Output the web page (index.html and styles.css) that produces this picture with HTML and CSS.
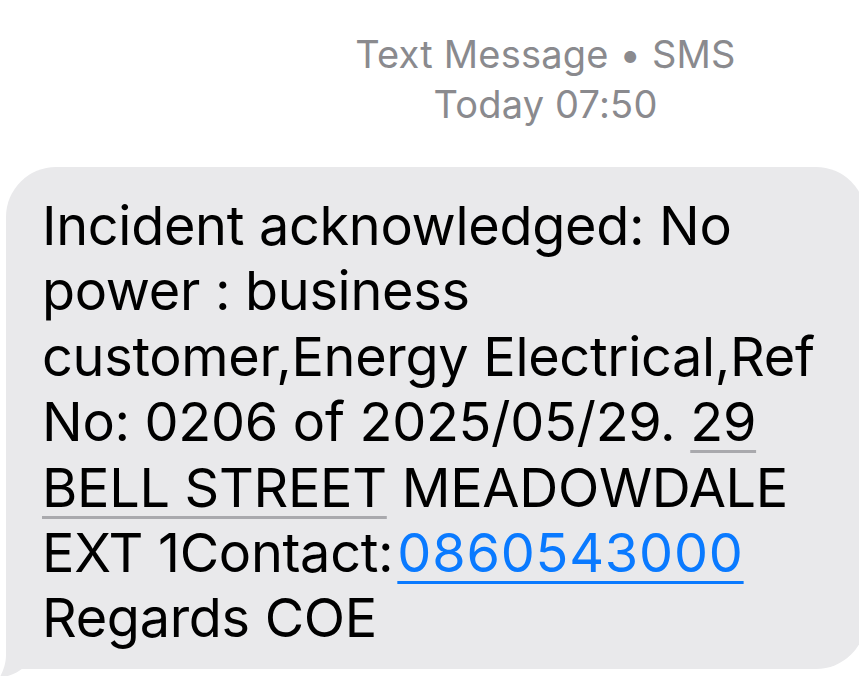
FILE: index.html
```html
<!DOCTYPE html>
<html>
<head>
<meta charset="utf-8">
<link rel="stylesheet" href="styles.css">
</head>
<body>
<div class="screen">
  <header class="meta">
    <div class="meta-line">Text Message • SMS</div>
    <div class="meta-line">Today 07:50</div>
  </header>
  <div class="bubble-wrap">
    <svg class="tail" width="30" height="40" viewBox="0 0 30 40"><path d="M6 0 L6 18 C6 27 3 34 0 40 C9 40 17 36 23 31 C26 32 28 32 30 32 L30 0 Z" fill="#e9e9eb"/></svg>
    <div class="bubble">
      <p class="msg">Incident acknowledged: No<br>power : business<br>customer,Energy Electrical,Ref<br>No: 0206 of 2025/05/29. <span class="addr">29<br>BELL STREET</span> MEADOWDALE<br>EXT 1Contact:<span class="phone">0860543000</span><br>Regards COE</p>
    </div>
  </div>
</div>
</body>
</html>
```
FILE: styles.css
```css
html, body {
  margin: 0;
  padding: 0;
  background: #ffffff;
  overflow: hidden;
}
.screen {
  width: 859px;
  height: 676px;
  font-family: "Inter", "Roboto", sans-serif;
  position: relative;
  overflow: hidden;
}
.meta {
  padding: 29px 0 0 232px;
  text-align: center;
  color: #8a8a8e;
  font-size: 38px;
  line-height: 50px;
  letter-spacing: 0.2px;
}
.bubble-wrap {
  position: relative;
  margin-top: 38px;
}
.bubble {
  margin-left: 6px;
  width: 860px;
  height: 502px;
  background: #e9e9eb;
  border-radius: 50px 50px 50px 0;
  box-sizing: border-box;
  padding: 26px 0 0 36px;
}
.msg {
  margin: 0;
  white-space: nowrap;
  font-size: 54px;
  line-height: 65.4px;
  color: #000;
  letter-spacing: -0.3px;
}
.addr {
  text-decoration: underline;
  text-decoration-color: #a9a9ad;
  text-decoration-thickness: 3px;
  text-underline-offset: 9px;
}
.phone {
  color: #0a7aff;
  letter-spacing: 0.8px;
  margin-left: 4px;
  text-decoration: underline;
  text-decoration-thickness: 3px;
  text-underline-offset: 9px;
}
.tail {
  position: absolute;
  left: 0;
  bottom: -8px;
}
```
